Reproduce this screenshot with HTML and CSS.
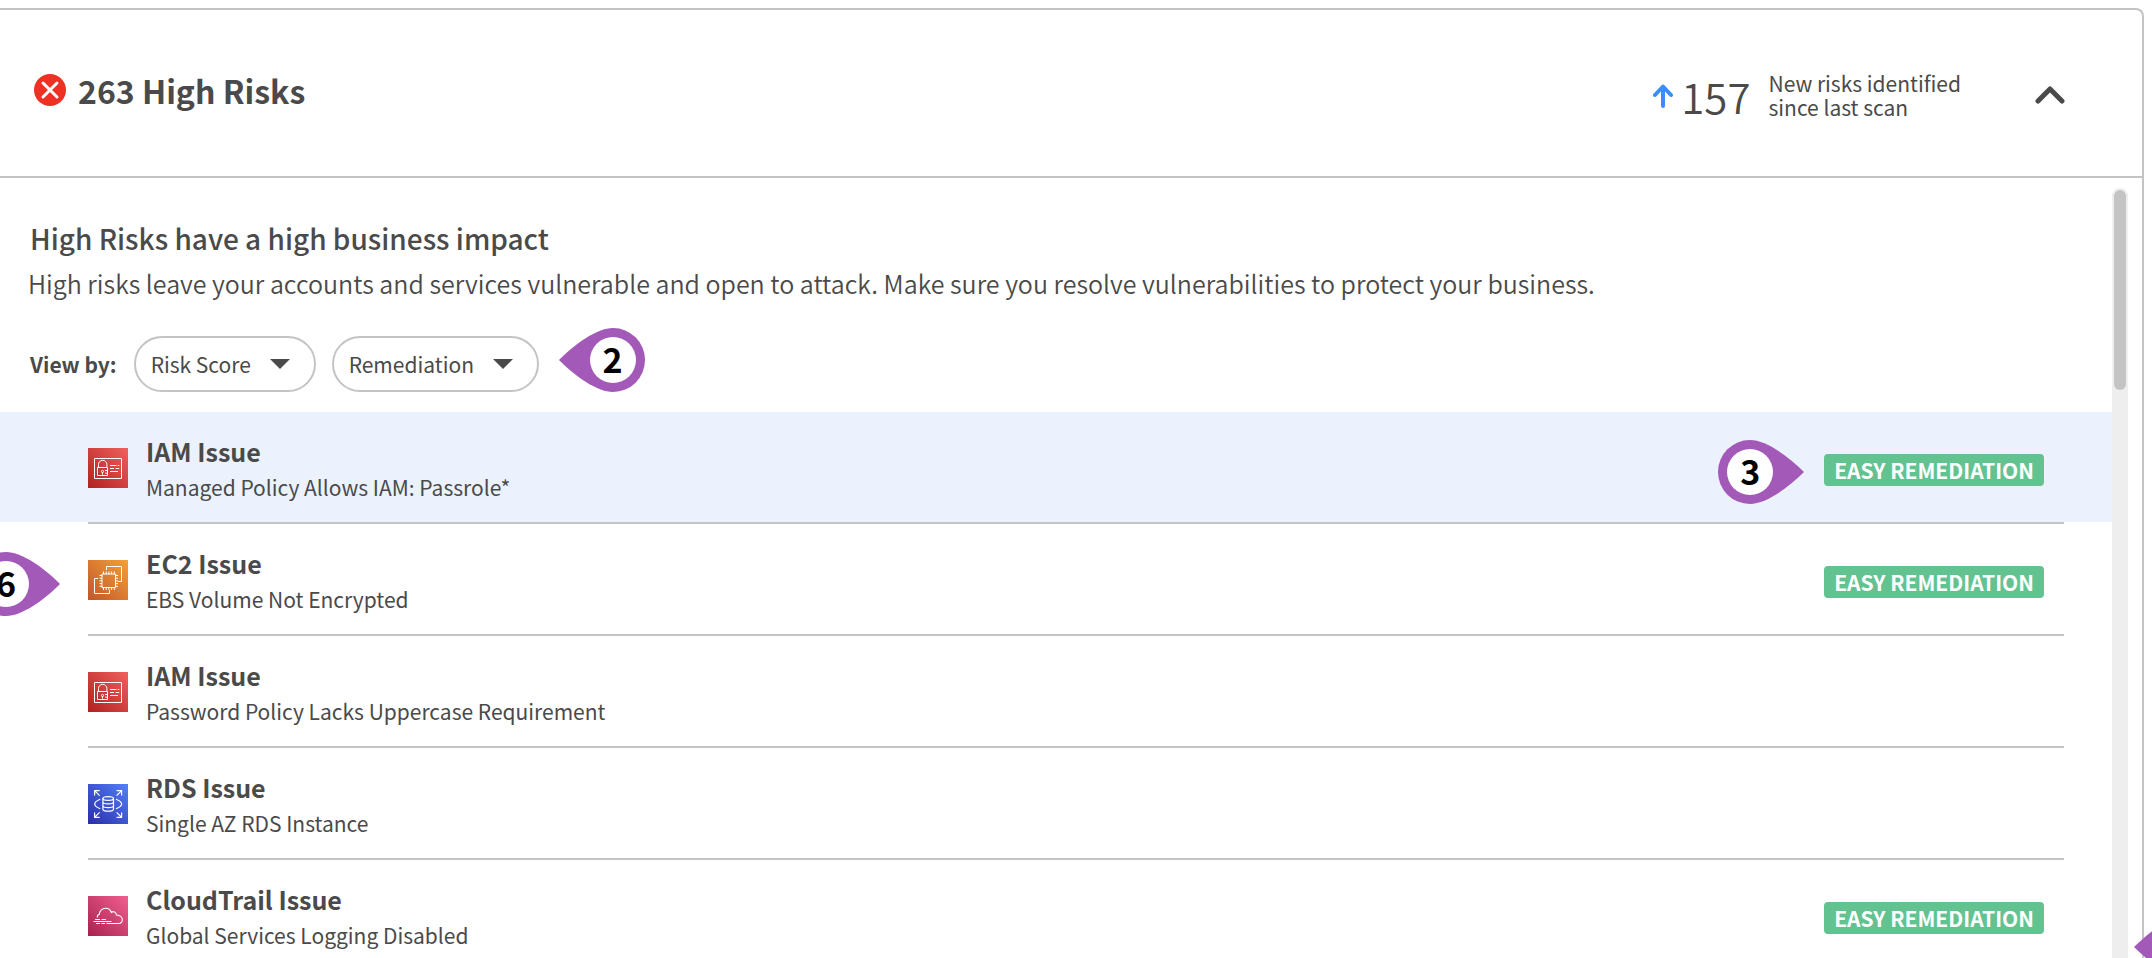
FILE: index.html
```
<!DOCTYPE html>
<html lang="en">
<head>
<meta charset="utf-8">
<title>High Risks</title>
<link rel="stylesheet" href="styles.css">
</head>
<body>
<svg class="defs" aria-hidden="true">
  <defs>
    <linearGradient id="red" x1="0" y1="1" x2="1" y2="0"><stop offset="0" stop-color="#b0211f"/><stop offset="1" stop-color="#f0605d"/></linearGradient>
    <linearGradient id="orange" x1="0" y1="1" x2="1" y2="0"><stop offset="0" stop-color="#c2562b"/><stop offset="1" stop-color="#f4a037"/></linearGradient>
    <linearGradient id="blue" x1="0" y1="1" x2="1" y2="0"><stop offset="0" stop-color="#2b2da8"/><stop offset="1" stop-color="#5280f8"/></linearGradient>
    <linearGradient id="pink" x1="0" y1="1" x2="1" y2="0"><stop offset="0" stop-color="#a8224f"/><stop offset="1" stop-color="#f05f8f"/></linearGradient>
    <symbol id="iam" viewBox="0 0 40 40">
      <rect width="40" height="40" fill="url(#red)"/>
      <g fill="none" stroke="#fff">
        <path d="M6.500 10.500h27v20h-27zM9.500 19.500h10v8h-10zM10.500 19.500v-3a4.200 4.200 0 0 1 8.400 0v3M17 22.500h2.500M17 25.200h2.500M14.500 24.500v2.200"/>
        <circle cx="14.500" cy="23.500" r="1.100"/>
        <path d="M22 17.500h6.500M29.700 17.500h1.600M22 20.500h4M27.700 20.500h3.500M22 23.500h8"/>
      </g>
    </symbol>
    <symbol id="ec2" viewBox="0 0 40 40">
      <rect width="40" height="40" fill="url(#orange)"/>
      <g fill="none" stroke="#fff">
        <path d="M14 14h13.500v13.500H14z"/>
        <path d="M18.500 10V6.500h15v15h-3.300M10 18.500H6.500v15h15v-3.300"/>
        <path d="M15.500 11.500V14M18.200 11.500V14M20.900 11.500V14M23.600 11.500V14M26.300 11.500V14M15.500 27.500V30M18.200 27.500V30M20.900 27.500V30M23.600 27.500V30M26.300 27.500V30M11.500 15.500H14M11.500 18.200H14M11.500 20.900H14M11.500 23.600H14M11.500 26.300H14M27.500 15.500H30M27.500 18.200H30M27.500 20.900H30M27.500 23.600H30M27.500 26.300H30"/>
      </g>
    </symbol>
    <symbol id="rds" viewBox="0 0 40 40">
      <rect width="40" height="40" fill="url(#blue)"/>
      <g fill="none" stroke="#fff" stroke-width="1.200">
        <ellipse cx="20.200" cy="14.500" rx="5.300" ry="1.900"/>
        <path d="M14.900 14.500v10.700c0 2.600 10.600 2.600 10.600 0V14.500M14.900 18c0 2.500 10.600 2.500 10.600 0M14.900 21.700c0 2.500 10.600 2.500 10.600 0"/>
        <path d="M12.300 15.200c-7.500 3-7.500 6.600 0 9.600M28 15.200c7.500 3 7.500 6.600 0 9.600"/>
        <path d="M6.600 11.500V6.600h5M6.600 6.600l5 5M28.600 6.600h5v4.900M33.600 6.600l-5 5M6.600 28.500v4.900h5M6.600 33.400l5-5M28.600 33.400h5v-4.900M33.600 33.400l-5-5"/>
      </g>
    </symbol>
    <symbol id="trail" viewBox="0 0 40 40">
      <rect width="40" height="40" fill="url(#pink)"/>
      <g fill="none" stroke="#fff" stroke-width="1.100">
        <path d="M9.300 21.500c-.2-1.700.7-2.700 2-3.200.1-3.200 2.800-6 6.300-6.100 2.900-.1 4.900 1.600 5.700 4.200 1.900-1.700 5-.4 5.200 2.600 3.700.4 5.800 2.400 5.800 4.800 0 2.300-1.600 3.700-4 3.700H18.500"/>
        <path d="M7 23.500h5M13.500 23.500h4.500M5.500 25.500h18M8 27.500h4M13.500 27.500h3.500"/>
      </g>
    </symbol>
    <symbol id="pin" viewBox="0 0 86 64">
      <path d="M32 0C48 0 70 16 86 32C70 48 48 64 32 64A32 32 0 0 1 32 0Z" fill="#a259b8"/>
      <circle cx="32" cy="32" r="23" fill="#fff"/>
    </symbol>
    <symbol id="caret" viewBox="0 0 20 10"><path d="M0 0h20L10 10z" fill="#4a4a4a"/></symbol>
  </defs>
</svg>

<main class="card">
  <header class="head">
    <svg class="alert" viewBox="0 0 32 32" aria-hidden="true"><circle cx="16" cy="16" r="16" fill="#ee3124"/><path d="M9 9l14 14M23 9L9 23" stroke="#fff" stroke-width="3" stroke-linecap="round"/></svg>
    <h1 class="count">263 High Risks</h1>
    <div class="trend">
      <svg class="arrow" viewBox="0 0 20 24" aria-hidden="true"><path d="M10 22V3M2 11l8-8.500 8 8.500" fill="none" stroke="#3b8cff" stroke-width="4" stroke-linecap="round" stroke-linejoin="round"/></svg>
      <span class="number">157</span>
      <span class="note">New risks identified<br>since last scan</span>
    </div>
    <button class="toggle" type="button" aria-label="Collapse"><svg viewBox="0 0 30 20" aria-hidden="true"><path d="M3 16L15 4l12 12" fill="none" stroke="#4a4a4a" stroke-width="5" stroke-linecap="round" stroke-linejoin="round"/></svg></button>
  </header>

  <div class="body">
    <section class="content">
      <h2 class="title">High Risks have a high business impact</h2>
      <p class="lead">High risks leave your accounts and services vulnerable and open to attack. Make sure you resolve vulnerabilities to protect your business.</p>
      <div class="filters">
        <span class="label">View by:</span>
        <span class="pill"><select aria-label="View by risk score"><option>Risk Score</option></select><svg class="caret" aria-hidden="true"><use href="#caret"/></svg></span>
        <span class="pill"><select aria-label="View by remediation"><option>Remediation</option></select><svg class="caret" aria-hidden="true"><use href="#caret"/></svg></span>
        <span class="pin"><svg class="flip" aria-hidden="true"><use href="#pin"/></svg><b class="right">2</b></span>
      </div>
      <ul class="list">
        <li class="row selected"><div class="item">
          <svg class="icon" aria-hidden="true"><use href="#iam"/></svg>
          <div class="text"><h3>IAM Issue</h3><p>Managed Policy Allows IAM: Passrole*</p></div>
          <span class="pin"><svg aria-hidden="true"><use href="#pin"/></svg><b>3</b></span>
          <span class="badge">EASY REMEDIATION</span>
        </div></li>
        <li class="row"><div class="item">
          <svg class="icon" aria-hidden="true"><use href="#ec2"/></svg>
          <div class="text"><h3>EC2 Issue</h3><p>EBS Volume Not Encrypted</p></div>
          <span class="badge">EASY REMEDIATION</span>
        </div><span class="pin edge"><svg aria-hidden="true"><use href="#pin"/></svg><b>6</b></span></li>
        <li class="row"><div class="item">
          <svg class="icon" aria-hidden="true"><use href="#iam"/></svg>
          <div class="text"><h3>IAM Issue</h3><p>Password Policy Lacks Uppercase Requirement</p></div>
        </div></li>
        <li class="row"><div class="item">
          <svg class="icon" aria-hidden="true"><use href="#rds"/></svg>
          <div class="text"><h3>RDS Issue</h3><p>Single AZ RDS Instance</p></div>
        </div></li>
        <li class="row"><div class="item">
          <svg class="icon" aria-hidden="true"><use href="#trail"/></svg>
          <div class="text"><h3>CloudTrail Issue</h3><p>Global Services Logging Disabled</p></div>
          <span class="badge">EASY REMEDIATION</span>
        </div></li>
      </ul>
    </section>
    <div class="track"><div class="thumb"></div></div>
  </div>
</main>
<span class="pin corner"><svg class="flip" aria-hidden="true"><use href="#pin"/></svg></span>
</body>
</html>
```
FILE: styles.css
```
* { box-sizing: border-box; }
body {
  margin: 0;
  height: 100vh;
  overflow: hidden;
  position: relative;
  display: flex;
  flex-direction: column;
  background: #fff;
  color: #4a4a4a;
  font-family: "Noto Sans CJK SC", "Noto Sans", sans-serif;
  font-size: 21px;
  font-weight: 400;
}
h1, h2, h3, p, ul { margin: 0; padding: 0; }
.defs { position: absolute; width: 0; height: 0; }

.card {
  flex: 1;
  min-height: 0;
  display: flex;
  flex-direction: column;
  margin: 8px 8px 0 0;
  border: 2px solid #c4c4c4;
  border-width: 2px 2px 0 0;
  border-top-right-radius: 8px;
}
.head {
  display: flex;
  align-items: center;
  height: 168px;
  padding: 0 77px 6px 34px;
  border-bottom: 2px solid #c4c4c4;
}
.alert { width: 32px; height: 32px; margin-right: 12px; }
.count { font-size: 32px; line-height: 40px; font-weight: 700; }
.trend { display: flex; align-items: center; margin: 10px 74px 0 auto; }
.arrow { width: 20px; height: 24px; margin: 2px 8px 0 0; }
.number { font-size: 42px; line-height: 48px; margin: 2px 18px 0 0; font-weight: 350; }
.note { line-height: 24px; }
.toggle { margin-top: 10px; padding: 0; border: 0; background: none; cursor: pointer; }
.toggle svg { display: block; width: 30px; height: 20px; }

.body { flex: 1; min-height: 0; display: flex; }
.content { flex: 1; min-width: 0; padding-top: 38px; }
.title { margin-left: 30px; font-size: 28px; line-height: 44px; font-weight: 500; }
.lead { margin-left: 28px; font-size: 25px; line-height: 46px; font-weight: 350; }
.filters { display: flex; align-items: center; margin: 22px 0 12px 30px; height: 72px; }
.label { font-weight: 700; margin-right: 17px; }
.pill { position: relative; display: flex; align-items: center; margin-right: 16px; }
.pill select {
  appearance: none;
  height: 56px;
  padding: 0 62px 0 15px;
  border: 2px solid #c4c4c4;
  border-radius: 28px;
  background: #fff;
  color: inherit;
  font: inherit;
}
.caret { position: absolute; right: 26px; width: 20px; height: 10px; pointer-events: none; }

.pin { position: relative; display: block; width: 86px; height: 64px; color: #000; }
.pin svg { display: block; width: 86px; height: 64px; }
.pin b {
  position: absolute;
  top: 0;
  left: 0;
  width: 64px;
  text-align: center;
  font-size: 34px;
  font-weight: 700;
  line-height: 62px;
}
.pin .flip { transform: scaleX(-1); }
.pin .right { left: auto; right: 0; }
.filters .pin { margin: 0 0 8px 4px; }

.list { list-style: none; }
.row { position: relative; padding: 0 48px 0 88px; }
.selected { background: linear-gradient(#ebf2fe, #ebf2fe) no-repeat 0 0 / 100% 110px; }
.item {
  display: flex;
  align-items: flex-start;
  height: 112px;
  padding: 21px 20px 0 0;
  border-bottom: 2px solid #c4c4c4;
}
.icon { width: 40px; height: 40px; margin: 15px 18px 0 0; }
.text { flex: 1; }
.text h3 { font-size: 25px; line-height: 36px; font-weight: 700; }
.text p { line-height: 36px; }
.item .pin { margin: 7px 20px 0 0; }
.badge {
  margin-top: 21px;
  padding: 0 10px;
  border-radius: 4px;
  background: #62c391;
  color: #fff;
  line-height: 32px;
  font-weight: 700;
}
.edge { position: absolute; left: -26px; top: 28px; }
.corner { position: absolute; right: -68px; bottom: -21px; }

.track {
  width: 16px;
  margin: 10px 14px 0 0;
  padding: 2px;
  border-radius: 8px 8px 0 0;
  background: #eee;
}
.thumb { height: 200px; border-radius: 6px; background: #c4c4c4; }
```
